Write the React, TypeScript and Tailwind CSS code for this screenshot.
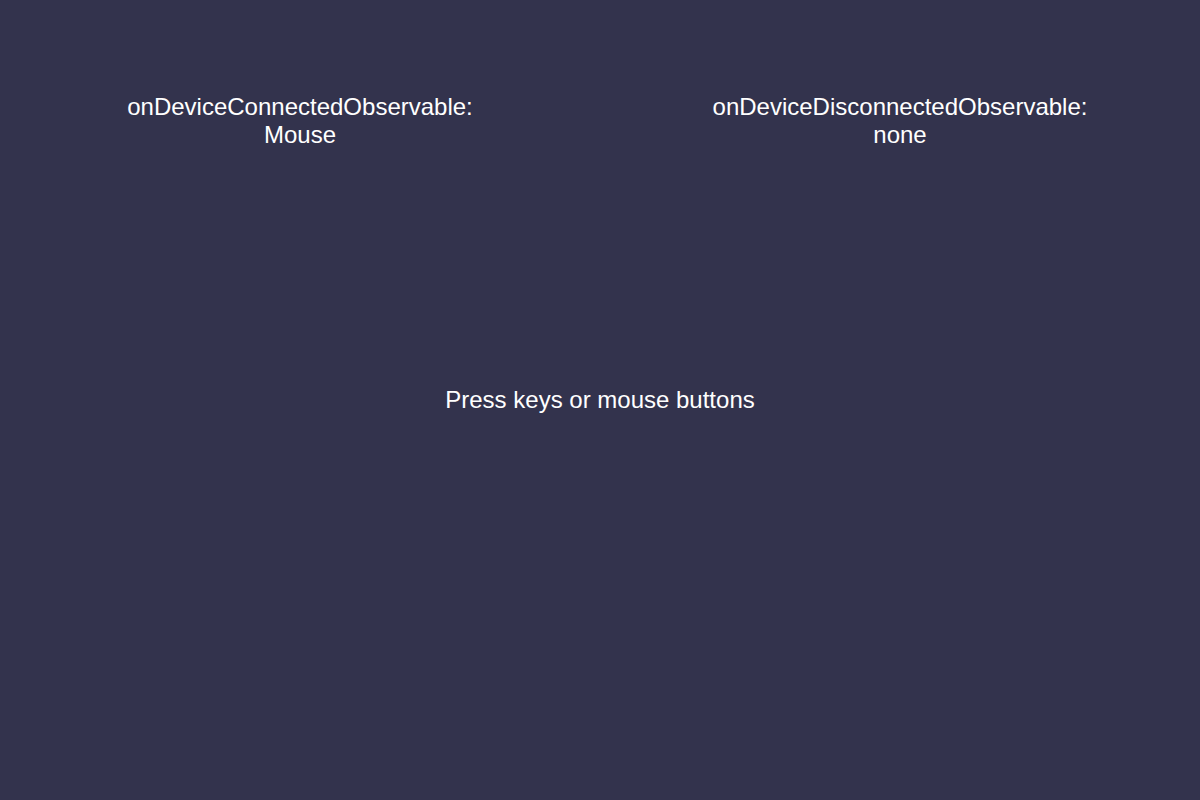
const labels = [
  { name: "onDeviceConnectedObservable:", value: "Mouse" },
  { name: "onDeviceDisconnectedObservable:", value: "none" },
];

export default function App() {
  return (
    <div className="grid h-[800px] w-full bg-[#33334d] text-white font-['Liberation_Sans',Arial,sans-serif] text-[24px] leading-[28px]">
      {/* Device events */}
      <div className="col-start-1 row-start-1 grid grid-cols-2 items-start pt-[93px]">
        {labels.map(({ name, value }) => (
          <div key={name} className="text-center">
            <div>{name}</div>
            <div>{value}</div>
          </div>
        ))}
      </div>

      {/* Prompt */}
      <div className="col-start-1 row-start-1 flex items-center justify-center">
        <p>Press keys or mouse buttons</p>
      </div>
    </div>
  );
}
